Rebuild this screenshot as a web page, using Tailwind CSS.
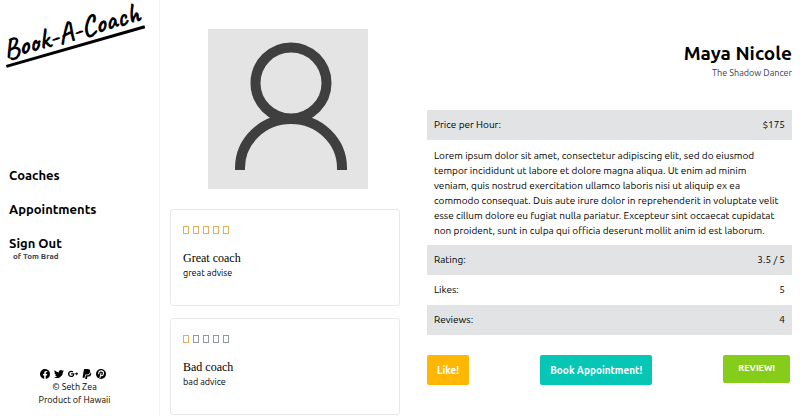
<!DOCTYPE html>
<html lang="en">
<head>
    <meta charset="UTF-8">
    <meta name="viewport" content="width=device-width, initial-scale=1.0">
    <title>Book-A-Coach - Maya Nicole</title>
    <script src="https://cdn.jsdelivr.net/npm/@tailwindcss/browser@4"></script>
</head>
<body class="flex h-screen overflow-hidden bg-white font-['Ubuntu','Noto_Sans',sans-serif] text-[10px] text-black">
    <!-- Sidebar -->
    <aside class="flex w-1/5 shrink-0 flex-col border-r border-gray-100">
        <a href="#" class="mt-4 ml-1 h-8 w-36 origin-bottom -rotate-16 border-b-3 border-black text-center font-['Caveat','Lato',cursive] text-[29px]/[29px] font-bold whitespace-nowrap">Book-A-Coach</a>

        <nav class="mt-[119px] flex flex-col gap-[18px] pl-[9px] text-[13px]/[16px] font-bold">
            <a href="#">Coaches</a>
            <a href="#">Appointments</a>
            <a href="#">Sign Out
                <span class="block pl-1 text-[8px]/[12px] font-bold text-gray-700">of Tom Brad</span>
            </a>
        </nav>

        <footer class="mt-auto pr-[10px] pb-[9px] text-center text-[9px]/[13px]">
            <div class="mb-[2px] flex justify-center gap-1 pr-1">
                <a href="#" aria-label="Facebook">
                    <svg class="size-[10px]" viewBox="0 0 24 24" fill="currentColor">
                        <path d="M24 12a12 12 0 1 0-13.9 11.9v-8.4H7.1V12h3V9.4c0-3 1.800-4.700 4.500-4.700 1.300 0 2.700.3 2.700.3v3h-1.500c-1.500 0-1.900.9-1.900 1.900V12h3.300l-.5 3.500h-2.800v8.400A12 12 0 0 0 24 12z" />
                    </svg>
                </a>
                <a href="#" aria-label="Twitter">
                    <svg class="size-[10px]" viewBox="0 0 24 24" fill="currentColor">
                        <path d="M24 4.600a10 10 0 0 1-2.800.8 5 5 0 0 0 2.100-2.700 10 10 0 0 1-3.100 1.200 4.900 4.900 0 0 0-8.400 4.500A14 14 0 0 1 1.700 3.200a4.900 4.900 0 0 0 1.500 6.500 5 5 0 0 1-2.200-.6 4.900 4.900 0 0 0 3.900 4.900 5 5 0 0 1-2.200.1 4.900 4.900 0 0 0 4.600 3.400A10 10 0 0 1 0 19.500 14 14 0 0 0 21.500 7.100 10 10 0 0 0 24 4.600z" />
                    </svg>
                </a>
                <a href="#" aria-label="Google Plus">
                    <svg class="size-[10px]" viewBox="0 0 24 24" fill="currentColor">
                        <path d="M7.600 10.400v2.900h4.500c-.4 1.700-1.900 3-4.300 3a4.600 4.600 0 0 1 0-9.200c1.200 0 2.200.4 3 1.200l2.200-2.200A7.700 7.700 0 1 0 7.800 19.400c4.500 0 7.500-3.100 7.500-7.600 0-.5 0-1-.1-1.400zM22 10.400V8.100h-2.400v2.300h-2.300v2.400h2.300v2.300H22v-2.300h2v-2.400z" />
                    </svg>
                </a>
                <a href="#" aria-label="PayPal">
                    <svg class="size-[10px]" viewBox="0 0 24 24" fill="currentColor">
                        <path d="M4.600 1.200C4.700.5 5.200 0 6 0h7.500c4.500 0 6.800 2.400 6 6.400-.9 4.800-4 7-8.600 7H8.700c-.7 0-1.200.5-1.300 1.200L6.300 21H2c-.5 0-.7-.3-.6-.8z" />
                        <path d="M21 7.500c1.200 1.200 1.500 2.800 1.100 4.900-.8 4-3.500 5.500-7.200 5.500h-1c-.6 0-1 .4-1.100 1l-.7 4.200c-.1.500-.5.900-1.100.9H7.600l1.400-8.900h2.400c5.400 0 8.700-2.600 9.600-7.600z" />
                    </svg>
                </a>
                <a href="#" aria-label="Pinterest">
                    <svg class="size-[10px]" viewBox="0 0 24 24">
                        <circle cx="12" cy="12" r="12" />
                        <path d="M7 13c-2-5 1-8.500 5.300-8.500 3.700 0 5.700 2.300 5.700 5.300 0 4-2.200 6.200-4.400 6.200-1 0-1.700-.5-2-1M12.300 9l-3 13" fill="none" stroke="white" stroke-width="2.500" />
                    </svg>
                </a>
            </div>
            <p>© Seth Zea</p>
            <p>Product of Hawaii</p>
        </footer>
    </aside>

    <main class="grid flex-1 grid-cols-[230fr_365fr] gap-[27px] pr-2 pl-[10px]">
        <!-- Photo and reviews -->
        <section class="flex flex-col pt-[29px]">
            <svg class="mb-5 ml-[38px] size-40 shrink-0 bg-[#e4e4e4]" viewBox="0 0 160 160" fill="none" stroke="#3f3f3f" stroke-width="10" role="img" aria-label="Coach photo">
                <circle cx="83" cy="54" r="35.500" />
                <path d="M32 141v-2a51 49 0 0 1 102 0v2" />
            </svg>

            <article class="mb-3 h-[97px] shrink-0 rounded-[3px] border border-[#e8e8e8] px-3 pt-4">
                <div class="mb-4 flex gap-1" role="img" aria-label="5 of 5 stars">
                    <span class="h-2 w-[6px] border border-[#e3ad5c]"></span>
                    <span class="h-2 w-[6px] border border-[#e3ad5c]"></span>
                    <span class="h-2 w-[6px] border border-[#e3ad5c]"></span>
                    <span class="h-2 w-[6px] border border-[#e3ad5c]"></span>
                    <span class="h-2 w-[6px] border border-[#e3ad5c]"></span>
                </div>
                <h3 class="font-['Liberation_Serif',serif] text-[12px]/[16px]">Great coach</h3>
                <p class="text-[9px]/[14px]">great advise</p>
            </article>

            <article class="h-[97px] shrink-0 rounded-[3px] border border-[#e8e8e8] px-3 pt-4">
                <div class="mb-4 flex gap-1" role="img" aria-label="1 of 5 stars">
                    <span class="h-2 w-[6px] border border-[#e3ad5c]"></span>
                    <span class="h-2 w-[6px] border border-[#8f9a9c]"></span>
                    <span class="h-2 w-[6px] border border-[#8f9a9c]"></span>
                    <span class="h-2 w-[6px] border border-[#8f9a9c]"></span>
                    <span class="h-2 w-[6px] border border-[#8f9a9c]"></span>
                </div>
                <h3 class="font-['Liberation_Serif',serif] text-[12px]/[16px]">Bad coach</h3>
                <p class="text-[9px]/[14px]">bad advice</p>
            </article>
        </section>

        <!-- Coach details -->
        <section class="pt-10">
            <header class="mb-[30px] text-right">
                <h1 class="text-[19px]/[26px] font-bold">Maya Nicole</h1>
                <p class="text-[9px]/[14px] text-gray-700">The Shadow Dancer</p>
            </header>

            <dl class="leading-4">
                <div class="flex justify-between bg-[#e1e3e5] px-[7px] py-[7px]">
                    <dt>Price per Hour:</dt>
                    <dd>$175</dd>
                </div>
            </dl>
            <p class="px-[7px] pt-2 pb-[7px] leading-[15px] whitespace-nowrap">
                Lorem ipsum dolor sit amet, consectetur adipiscing elit, sed do eiusmod<br>
                tempor incididunt ut labore et dolore magna aliqua. Ut enim ad minim<br>
                veniam, quis nostrud exercitation ullamco laboris nisi ut aliquip ex ea<br>
                commodo consequat. Duis aute irure dolor in reprehenderit in voluptate velit<br>
                esse cillum dolore eu fugiat nulla pariatur. Excepteur sint occaecat cupidatat<br>
                non proident, sunt in culpa qui officia deserunt mollit anim id est laborum.
            </p>
            <dl class="leading-4">
                <div class="flex justify-between bg-[#e1e3e5] px-[7px] py-[7px]">
                    <dt>Rating:</dt>
                    <dd>3.5 / 5</dd>
                </div>
                <div class="flex justify-between px-[7px] py-[7px]">
                    <dt>Likes:</dt>
                    <dd>5</dd>
                </div>
                <div class="flex justify-between bg-[#e1e3e5] px-[7px] py-[7px]">
                    <dt>Reviews:</dt>
                    <dd>4</dd>
                </div>
            </dl>

            <div class="mt-5 flex items-start justify-between pr-[2px] font-bold text-white">
                <button type="button" class="h-[30px] rounded-[2px] bg-[#ffb703] px-[10px]">Like!</button>
                <button type="button" class="h-[30px] rounded-[2px] bg-[#06c6b6] px-[10px]">Book Appointment!</button>
                <button type="button" class="h-7 rounded-[2px] bg-[#86cd1b] px-[15px] text-[9px]">REVIEW!</button>
            </div>
        </section>
    </main>
</body>
</html>
